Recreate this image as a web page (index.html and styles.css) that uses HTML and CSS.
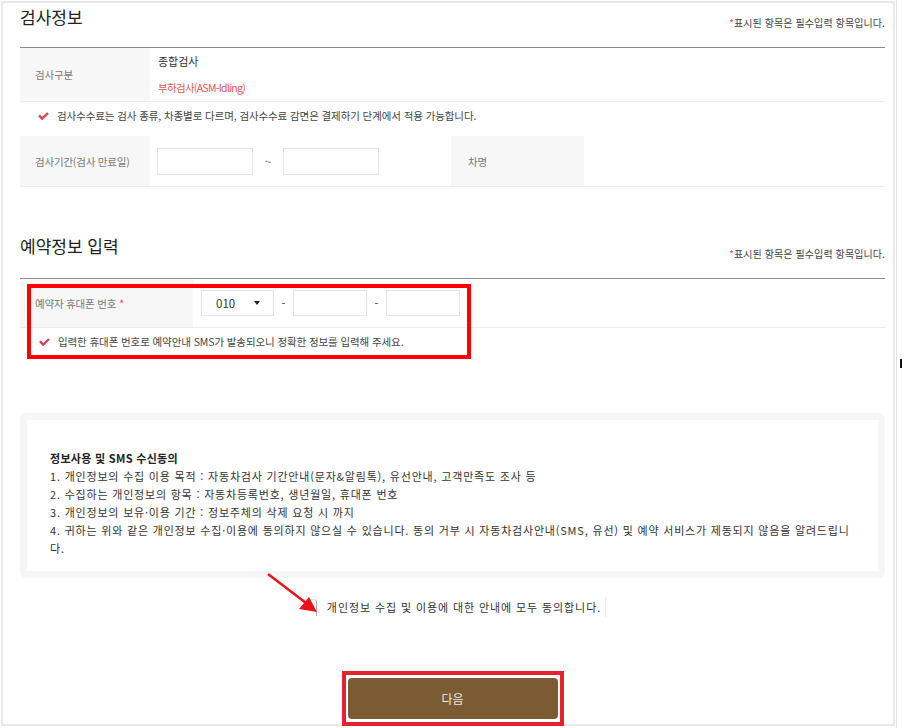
FILE: index.html
```html
<!DOCTYPE html>
<html lang="ko">
<head>
  <meta charset="UTF-8">
  <meta name="viewport" content="width=device-width, initial-scale=1.0">
  <title>검사예약</title>
  <link rel="stylesheet" href="styles.css">
</head>
<body>
  <div class="frame">

    <!-- 검사정보 -->
    <div class="sec-head">
      <h2>검사정보</h2>
      <p class="req"><span class="star">*</span>표시된 항목은 필수입력 항목입니다.</p>
    </div>
    <div class="table">
      <div class="row row-kind">
        <div class="th th-narrow">검사구분</div>
        <div class="td td-kind">
          <p class="kind-main">종합검사</p>
          <p class="kind-sub">부하검사(ASM-Idling)</p>
        </div>
      </div>
      <div class="note">
        <svg class="check" width="11" height="8" viewBox="0 0 11 8"><polyline points="1,3.4 4.2,6.6 10,1" fill="none" stroke="#d9434d" stroke-width="2.4"/></svg>
        검사수수료는 검사 종류, 차종별로 다르며, 검사수수료 감면은 결제하기 단계에서 적용 가능합니다.
      </div>
      <div class="row row-period">
        <div class="th th-narrow">검사기간(검사 만료일)</div>
        <div class="td td-period">
          <span class="input input-date"></span>
          <span class="tilde">~</span>
          <span class="input input-date"></span>
        </div>
        <div class="th th-car">차명</div>
        <div class="td td-fill"></div>
      </div>
    </div>

    <!-- 예약정보 입력 -->
    <div class="sec-head sec-two">
      <h2>예약정보 입력</h2>
      <p class="req"><span class="star">*</span>표시된 항목은 필수입력 항목입니다.</p>
    </div>
    <div class="table table-phone">
      <div class="row row-phone">
        <div class="th th-wide">예약자 휴대폰 번호 <span class="star">*</span></div>
        <div class="td td-phone">
          <span class="select">010<span class="caret"></span></span>
          <span class="dash">-</span>
          <span class="input input-tel"></span>
          <span class="dash">-</span>
          <span class="input input-tel"></span>
        </div>
      </div>
      <div class="note note-phone">
        <svg class="check" width="11" height="8" viewBox="0 0 11 8"><polyline points="1,3.4 4.2,6.6 10,1" fill="none" stroke="#d9434d" stroke-width="2.4"/></svg>
        입력한 휴대폰 번호로 예약안내 SMS가 발송되오니 정확한 정보를 입력해 주세요.
      </div>
      <div class="mark-box"></div>
    </div>

    <!-- 동의 -->
    <div class="terms">
      <div class="terms-inner">
        <p class="terms-title">정보사용 및 SMS 수신동의</p>
        <p>1. 개인정보의 수집 이용 목적 : 자동차검사 기간안내(문자&amp;알림톡), 유선안내, 고객만족도 조사 등</p>
        <p>2. 수집하는 개인정보의 항목 : 자동차등록번호, 생년월일, 휴대폰 번호</p>
        <p>3. 개인정보의 보유·이용 기간 : 정보주체의 삭제 요청 시 까지</p>
        <p>4. 귀하는 위와 같은 개인정보 수집·이용에 동의하지 않으실 수 있습니다. 동의 거부 시 자동차검사안내(SMS, 유선) 및 예약 서비스가 제동되지 않음을 알려드립니다.</p>
      </div>
    </div>

    <div class="agree">
      <label class="agree-label"><span class="agree-box"></span>개인정보 수집 및 이용에 대한 안내에 모두 동의합니다.</label>
    </div>

    <svg class="arrow" width="60" height="50" viewBox="0 0 60 50">
      <line x1="6" y1="6" x2="44" y2="35" stroke="#e8141b" stroke-width="2.6"/>
      <polygon points="55,44 37,41 47,29" fill="#e8141b"/>
    </svg>

    <div class="next-wrap">
      <div class="next-mark">
        <button class="next-btn">다음</button>
      </div>
    </div>
  </div>

  <div class="rail"><span class="rail-mark"></span></div>
</body>
</html>
```

FILE: styles.css
```css
/* Global */
body {
  margin: 0;
  font-family: "Noto Sans CJK KR", "Noto Sans", sans-serif;
  background-color: #fff;
  color: #333;
  display: flex;
  align-items: flex-start;
}

p {
  margin: 0;
}

.frame {
  position: relative;
  margin: 1px 0 0 1px;
  width: 894px;
  height: 725px;
  box-sizing: border-box;
  border: 2px solid #e9e9e9;
  padding: 0 8px 0 17px;
}

/* Side rail */
.rail {
  margin-left: 1px;
  width: 5px;
  height: 728px;
  border-left: 1px solid #e2e2e2;
}

.rail-mark {
  display: block;
  margin: 359px 0 0 3px;
  width: 2px;
  height: 9px;
  background-color: #111;
}

/* Section heading */
.sec-head {
  display: flex;
  justify-content: space-between;
  align-items: flex-start;
  height: 44px;
}

.sec-two {
  margin-top: 47px;
}

.sec-head h2 {
  margin: 0;
  font-size: 17px;
  font-weight: 400;
  line-height: 28px;
  color: #222;
}

.sec-two h2 {
  margin-top: -2px;
}

.req {
  margin-top: 13px;
  font-size: 10px;
  line-height: 14px;
  color: #444;
  letter-spacing: 0.1px;
}

.star {
  color: #e2463f;
}

/* Tables */
.table {
  position: relative;
  border-top: 1px solid #8c8c8c;
}

.row {
  display: flex;
  border-bottom: 1px solid #ececec;
}

.th {
  display: flex;
  align-items: center;
  box-sizing: border-box;
  background-color: #f7f7f7;
  padding-left: 15px;
  font-size: 10.5px;
  color: #777;
  letter-spacing: -0.2px;
}

.th-narrow {
  width: 130px;
}

.th-wide {
  width: 173px;
}

.th-wide .star {
  margin-left: 3px;
}

.th-car {
  width: 133px;
  padding-left: 17px;
}

.td {
  display: flex;
  align-items: center;
  box-sizing: border-box;
  font-size: 11px;
}

.row-kind {
  height: 53px;
}

.td-kind {
  flex-direction: column;
  align-items: flex-start;
  padding: 5px 0 0 8px;
}

.kind-main {
  line-height: 16px;
  color: #333;
}

.kind-sub {
  margin-top: 11px;
  line-height: 16px;
  color: #d95a4e;
  font-size: 10.5px;
  letter-spacing: -0.7px;
}

.note {
  display: flex;
  align-items: center;
  height: 34px;
  box-sizing: border-box;
  padding: 0 0 7px 18px;
  font-size: 10.5px;
  color: #444;
  letter-spacing: -0.1px;
}

.check {
  margin-right: 8px;
}

.row-period {
  height: 50px;
}

.td-period {
  width: 301px;
  padding-left: 7px;
}

.td-fill {
  flex: 1;
}

.input {
  display: inline-block;
  box-sizing: border-box;
  height: 27px;
  border: 1px solid #e4e4e4;
  background-color: #fff;
}

.input-date {
  width: 96px;
}

.tilde {
  width: 30px;
  text-align: center;
  color: #555;
}

/* Phone */
.row-phone {
  height: 48px;
}

.td-phone {
  padding-left: 8px;
}

.select {
  display: inline-flex;
  align-items: center;
  box-sizing: border-box;
  width: 73px;
  height: 26px;
  padding-left: 14px;
  border: 1px solid #e4e4e4;
  font-size: 11.5px;
  color: #333;
}

.caret {
  margin-left: 19px;
  width: 0;
  height: 0;
  border-left: 3.5px solid transparent;
  border-right: 3.5px solid transparent;
  border-top: 4px solid #222;
}

.input-tel {
  width: 74px;
  height: 26px;
}

.dash {
  width: 19px;
  text-align: center;
  color: #333;
}

.note-phone {
  padding-left: 19px;
}

.mark-box {
  position: absolute;
  top: 5px;
  left: 7px;
  width: 444px;
  height: 75px;
  box-sizing: border-box;
  border: 4px solid #f00;
}

/* Terms */
.terms {
  margin-top: 51px;
  border: 7px solid #f6f6f6;
  border-radius: 6px;
}

.terms-inner {
  padding: 29px 16px 14px 23px;
  font-size: 11px;
  line-height: 18px;
  letter-spacing: 0.8px;
  color: #333;
}

.terms-title {
  font-weight: 700;
  letter-spacing: 0.3px;
  color: #222;
}

.agree {
  display: flex;
  justify-content: center;
  margin-top: 19px;
}

.agree-label {
  display: flex;
  align-items: center;
  height: 20px;
  padding-right: 4px;
  border-right: 1px solid #f1e4e4;
  font-size: 11px;
  letter-spacing: 0.9px;
  color: #333;
}

.agree-box {
  width: 18px;
  height: 17px;
  margin-right: 10px;
  box-sizing: border-box;
  border-right: 1px solid #aaa;
  border-top: 1px solid #e2e2e2;
  border-top-right-radius: 3px;
}

.arrow {
  position: absolute;
  left: 259px;
  top: 565px;
}

/* Next button */
.next-wrap {
  display: flex;
  justify-content: center;
  margin-top: 54px;
}

.next-mark {
  border: 4px solid #e3212f;
  padding: 3px 2px;
}

.next-btn {
  display: block;
  width: 210px;
  height: 41px;
  border: none;
  border-radius: 4px;
  background-color: #7b5b34;
  color: #efe9e0;
  font-family: inherit;
  font-size: 12px;
  cursor: pointer;
}
```
